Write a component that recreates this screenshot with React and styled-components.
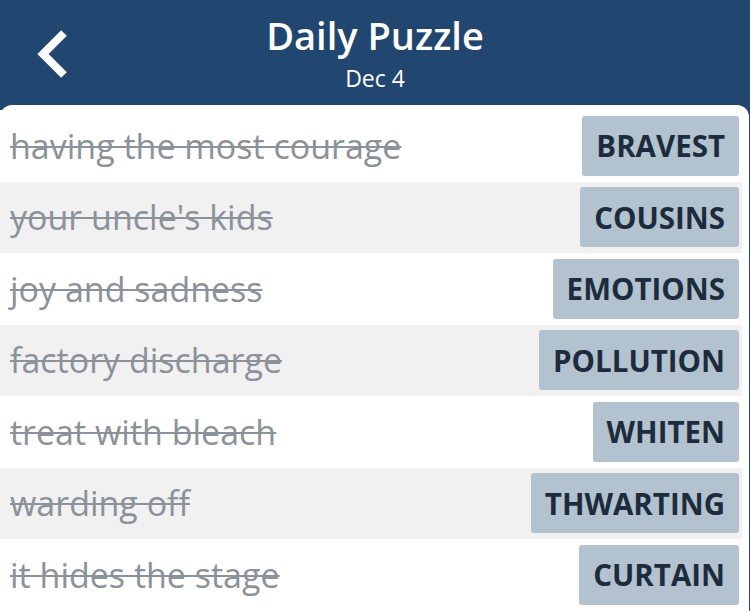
import React from "react";
import styled, { createGlobalStyle } from "styled-components";

const GlobalStyle = createGlobalStyle`
  html, body {
    margin: 0;
    padding: 0;
    background: #21466f;
    font-family: "Open Sans", "Lato", sans-serif;
  }
`;

const Page = styled.div`
  width: 750px;
  height: 611px;
  overflow: hidden;
  background: #21466f;
  display: flex;
  flex-direction: column;
`;

const Header = styled.header`
  height: 105px;
  flex: 0 0 105px;
  position: relative;
  display: flex;
  flex-direction: column;
  align-items: center;
  color: #ffffff;
`;

const BackButton = styled.button`
  position: absolute;
  left: 28px;
  top: 24px;
  width: 48px;
  height: 60px;
  padding: 0;
  border: none;
  background: transparent;
  display: flex;
  align-items: center;
  justify-content: center;
`;

const Title = styled.h1`
  margin: 10px 0 0;
  font-size: 38px;
  font-weight: 600;
  line-height: 50px;
`;

const Subtitle = styled.div`
  margin-top: 3px;
  font-size: 23px;
  line-height: 30px;
`;

const Panel = styled.main`
  flex: 1;
  margin-right: 1px;
  background: #ffffff;
  border-radius: 12px 12px 0 0;
  padding: 5px 7px 0 0;
  display: flex;
  flex-direction: column;
`;

const Row = styled.div`
  height: 71.5px;
  flex: 0 0 71.5px;
  display: flex;
  align-items: center;
  justify-content: space-between;
  padding: 0 3px 0 10px;
  box-sizing: border-box;
  background: ${(props) => (props.shaded ? "#f1f1f1" : "#ffffff")};
`;

const Clue = styled.span`
  font-size: 34px;
  line-height: 44px;
  color: #8b9299;
  text-decoration: line-through;
  text-decoration-thickness: 2px;
  white-space: nowrap;
`;

const Answer = styled.span`
  height: 60px;
  display: flex;
  align-items: center;
  padding: 0 14px;
  border-radius: 3px;
  background: #b2c2cf;
  color: #1d2c3d;
  font-size: 29.5px;
  font-weight: 700;
`;

const words = [
  ["having the most courage", "BRAVEST"],
  ["your uncle's kids", "COUSINS"],
  ["joy and sadness", "EMOTIONS"],
  ["factory discharge", "POLLUTION"],
  ["treat with bleach", "WHITEN"],
  ["warding off", "THWARTING"],
  ["it hides the stage", "CURTAIN"],
];

const App = () => (
  <Page>
    <GlobalStyle />
    <Header>
      <BackButton aria-label="Back">
        <svg width="36" height="52" viewBox="0 0 36 52">
          <path
            d="M30 5 L9 26 L30 47"
            fill="none"
            stroke="#ffffff"
            strokeWidth="8"
            strokeLinecap="butt"
            strokeLinejoin="miter"
          />
        </svg>
      </BackButton>
      <Title>Daily Puzzle</Title>
      <Subtitle>Dec 4</Subtitle>
    </Header>
    <Panel>
      {words.map(([clue, answer], i) => (
        <Row key={answer} shaded={i % 2 === 1}>
          <Clue>{clue}</Clue>
          <Answer>{answer}</Answer>
        </Row>
      ))}
    </Panel>
  </Page>
);

export default App;
